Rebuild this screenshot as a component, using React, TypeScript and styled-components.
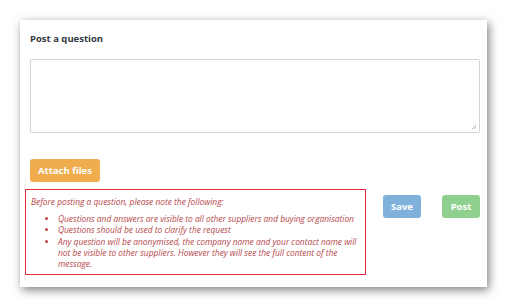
import React from "react";
import styled, { createGlobalStyle } from "styled-components";

const Global = createGlobalStyle`
  html, body { margin: 0; padding: 0; background: #fff; }
  body { font-family: "Open Sans", "Liberation Sans", sans-serif; }
  * { box-sizing: border-box; }
`;

const Page = styled.div`
  width: 507px;
  height: 307px;
  padding: 20px 20px 20px 20px;
`;

const Panel = styled.div`
  width: 467px;
  height: 267px;
  background: #fff;
  box-shadow: 2px 3px 9px rgba(0, 0, 0, 0.5);
  padding: 12px 7px 0 10px;
  display: flex;
  flex-direction: column;
`;

const Title = styled.h3`
  margin: 0;
  font-size: 9.5px;
  line-height: 14px;
  font-weight: 700;
  color: #333a44;
`;

const TextArea = styled.div`
  margin-top: 13px;
  width: 450px;
  height: 74px;
  border: 1px solid #d4d4d4;
  border-radius: 2px;
  position: relative;
`;

const Grip = styled.svg`
  position: absolute;
  right: 2px;
  bottom: 2px;
`;

const AttachButton = styled.button`
  margin-top: 26px;
  width: 70px;
  height: 23px;
  border: none;
  border-radius: 3px;
  background: #f0ad4e;
  color: #fff;
  font-family: inherit;
  font-size: 9.5px;
  font-weight: 700;
  padding: 0;
`;

const BottomRow = styled.div`
  margin-top: 7px;
  display: flex;
  align-items: flex-start;
`;

const Notice = styled.div`
  margin-left: -5px;
  width: 341px;
  height: 86px;
  border: 1.5px solid #ea2a36;
  padding: 6px 0 0 5px;
  font-size: 8.4px;
  font-style: italic;
  color: #b5474a;
  line-height: 11.2px;
`;

const Intro = styled.p`
  margin: 0 0 6px 0;
`;

const List = styled.ul`
  margin: 0;
  padding: 0 0 0 27px;
  width: 334px;
`;

const Actions = styled.div`
  display: flex;
  gap: 21px;
  margin-left: 17px;
  margin-top: 6px;
`;

const ActionButton = styled.button<{ $bg: string }>`
  width: 38px;
  height: 23px;
  border: none;
  border-radius: 3px;
  background: ${(p) => p.$bg};
  color: #fff;
  font-family: inherit;
  font-size: 9.5px;
  font-weight: 700;
  padding: 0;
`;

export default function App() {
  return (
    <>
      <Global />
      <Page>
        <Panel>
          <Title>Post a question</Title>
          <TextArea>
            <Grip width="6" height="6" viewBox="0 0 6 6">
              <path d="M5 1 L1 5 M5 3 L3 5" stroke="#aaa" strokeWidth="0.8" />
            </Grip>
          </TextArea>
          <div>
            <AttachButton>Attach files</AttachButton>
          </div>
          <BottomRow>
            <Notice>
              <Intro>Before posting a question, please note the following:</Intro>
              <List>
                <li>Questions and answers are visible to all other suppliers and buying organisation</li>
                <li>Questions should be used to clarify the request</li>
                <li>
                  Any question will be anonymised, the company name and your contact name will not be
                  visible to other suppliers. However they will see the full content of the message.
                </li>
              </List>
            </Notice>
            <Actions>
              <ActionButton $bg="#80b1dc">Save</ActionButton>
              <ActionButton $bg="#8fd08e">Post</ActionButton>
            </Actions>
          </BottomRow>
        </Panel>
      </Page>
    </>
  );
}
